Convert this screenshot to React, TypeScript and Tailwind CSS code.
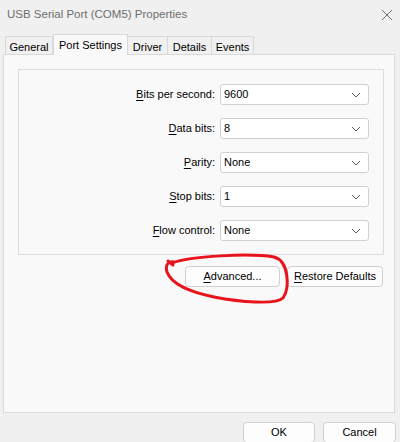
import React from "react";

const font = { fontFamily: '"Liberation Sans", Arial, sans-serif' };

function Chevron() {
  return (
    <svg width="10" height="6" viewBox="0 0 10 6" className="shrink-0">
      <polyline points="1,1 5,5 9,1" fill="none" stroke="#5f5f5f" strokeWidth="1" />
    </svg>
  );
}

function Row({ acc, rest, value }: { acc: string; rest: string; value: string }) {
  return (
    <div className="flex items-center h-[21px]">
      <div className="w-[197px] text-right pr-[1px] text-[11px] text-black leading-none">
        <u className="underline-offset-2">{acc}</u>
        {rest}
      </div>
      <div className="ml-[4px] w-[149px] h-[21px] bg-white border border-[#d0d0d0] rounded-[3px] flex items-center justify-between pl-[3px] pr-[7px] text-[11px] text-black">
        <span>{value}</span>
        <Chevron />
      </div>
    </div>
  );
}

function Btn({ children, w }: { children: React.ReactNode; w: string }) {
  return (
    <div
      className={`${w} h-[21px] bg-[#fdfdfd] border border-[#d0d0d0] rounded-[4px] flex items-center justify-center text-[11px] text-black`}
    >
      {children}
    </div>
  );
}

export default function App() {
  const tabs = ["General", "Port Settings", "Driver", "Details", "Events"];
  const widths = ["w-[48px]", "w-[75px]", "w-[40px]", "w-[44px]", "w-[42px]"];
  return (
    <div className="relative w-[400px] h-[442px] bg-[#f0f0f0] overflow-hidden" style={font}>
      {/* Title bar */}
      <div className="h-[30px] flex items-center justify-between pl-[7px] pr-[3px]">
        <span className="text-[11.5px] text-[#6e6e6e]">USB Serial Port (COM5) Properties</span>
        <svg width="14" height="14" viewBox="0 0 14 14" className="mr-[3px]">
          <path d="M2 2 L12 12 M12 2 L2 12" stroke="#6e6e6e" strokeWidth="1" />
        </svg>
      </div>
      {/* Tabs */}
      <div className="h-[24px] pl-[5px] flex items-end relative z-10">
        {tabs.map((t, i) =>
          i === 1 ? (
            <div
              key={t}
              className={`${widths[i]} h-[21px] -mb-px bg-[#f9f9f9] border border-b-0 border-[#d9d9d9] flex items-start justify-center pt-[2px] text-[11px] text-black`}
            >
              {t}
            </div>
          ) : (
            <div
              key={t}
              className={`${widths[i]} h-[18px] bg-[#f0f0f0] border border-b-0 border-[#d9d9d9] ${i > 0 ? "border-l-0" : ""} flex items-center justify-center pt-[3px] text-[11px] text-black`}
            >
              {t}
            </div>
          )
        )}
      </div>
      {/* Panel */}
      <div className="ml-[3px] w-[392px] h-[359px] border border-[#d9d9d9] bg-[#f9f9f9] pt-[14px] pl-[14px]">
        <div className="w-[366px] h-[186px] border border-[#dcdcdc] pt-[14px] flex flex-col gap-[13px]">
          <Row acc="B" rest="its per second:" value="9600" />
          <Row acc="D" rest="ata bits:" value="8" />
          <Row acc="P" rest="arity:" value="None" />
          <Row acc="S" rest="top bits:" value="1" />
          <Row acc="F" rest="low control:" value="None" />
        </div>
        <div className="w-[365px] mt-[11px] flex justify-end gap-[7px]">
          <Btn w="w-[95px]">
            <span>
              <u className="underline-offset-2">A</u>dvanced...
            </span>
          </Btn>
          <Btn w="w-[96px]">
            <span>
              <u className="underline-offset-2">R</u>estore Defaults
            </span>
          </Btn>
        </div>
      </div>
      {/* Bottom buttons */}
      <div className="mt-[9px] ml-[243px] flex gap-[8px]">
        <div className="w-[72px] h-[21px] bg-[#fdfdfd] border border-[#d0d0d0] rounded-[4px] flex items-center justify-center text-[11px] text-black">
          OK
        </div>
        <div className="w-[73px] h-[21px] bg-[#fdfdfd] border border-[#d0d0d0] rounded-[4px] flex items-center justify-center text-[11px] text-black">
          Cancel
        </div>
      </div>
      {/* Red annotation */}
      <svg className="absolute left-0 top-0 pointer-events-none" width="400" height="442">
        <path
          d="M168 261 L173 265 M172 263 C190 256 250 253 274 257 C289 261 290 288 283 298 C276 305 240 302 214 297 C190 292 172 285 167 272 C165 265 168 261 174 262"
          fill="none"
          stroke="#e8131b"
          strokeWidth="3"
          strokeLinecap="round"
          strokeLinejoin="round"
        />
      </svg>
    </div>
  );
}
